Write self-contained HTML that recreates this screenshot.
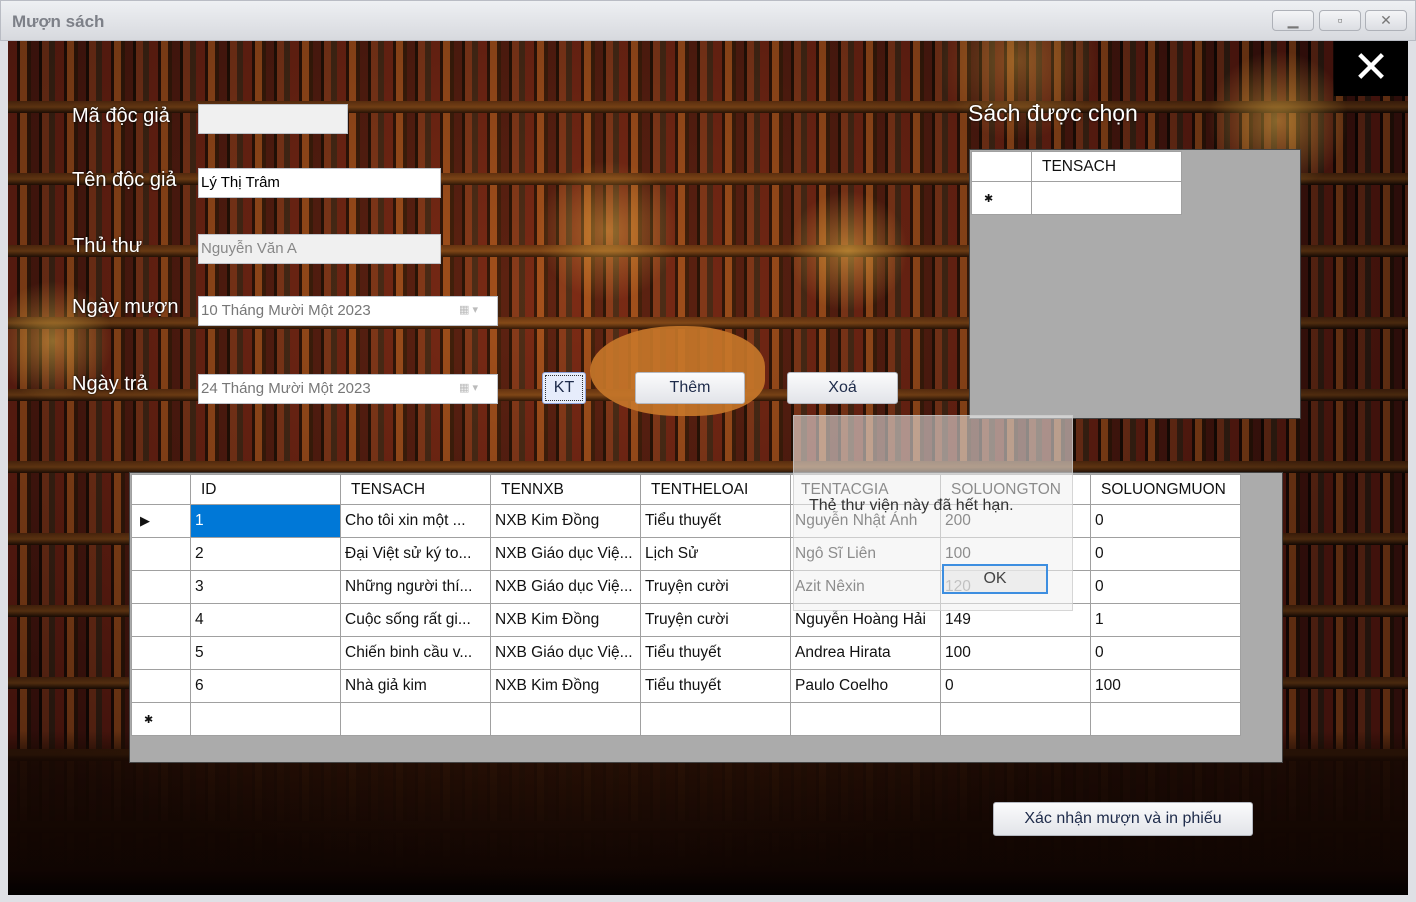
<!DOCTYPE html>
<html><head><meta charset="utf-8"><style>
*{margin:0;padding:0;box-sizing:border-box}
body{width:1416px;height:902px;overflow:hidden;background:#dfe0e5;font-family:"Liberation Sans","DejaVu Sans",sans-serif;position:relative}
.title{position:absolute;left:0;top:0;width:1416px;height:41px;background:linear-gradient(#eef0f3,#d7d9de);border:1px solid #b9bcc4}
.title span{position:absolute;left:11px;top:11px;font-size:17px;font-weight:bold;color:#7d8088}
.wb{position:absolute;top:9px;width:42px;height:21px;border:1px solid #aeb1b8;border-radius:4px;background:linear-gradient(#f4f5f7,#dcdee3);color:#777;text-align:center;font-size:14px;font-weight:bold;line-height:19px}
.main{position:absolute;left:8px;top:41px;width:1400px;height:854px;overflow:hidden;
background:
linear-gradient(180deg,rgba(0,0,0,0) 0,rgba(0,0,0,0) 690px,rgba(40,15,5,.9) 720px,#1a0803 830px,#050100 854px),
repeating-linear-gradient(180deg,rgba(0,0,0,0) 0,rgba(0,0,0,0) 60px,#5a2c10 60px,#7a4418 66px,#1a0a04 72px),
repeating-linear-gradient(90deg,#6a1e14 0,#6a1e14 9px,#1b0906 9px,#1b0906 12px,#9a4a1c 12px,#9a4a1c 19px,#2d1409 19px,#2d1409 23px,#4a1510 23px,#4a1510 31px,#120704 31px,#120704 34px,#7c321a 34px,#7c321a 41px,#3a2216 41px,#3a2216 47px);}
.dim{position:absolute;left:0;top:0;width:1400px;height:854px;background:
radial-gradient(circle at 45px 300px,rgba(255,200,80,.45),rgba(0,0,0,0) 60px),
radial-gradient(circle at 600px 190px,rgba(255,200,80,.4),rgba(0,0,0,0) 70px),
radial-gradient(circle at 840px 210px,rgba(255,200,80,.45),rgba(0,0,0,0) 60px),
radial-gradient(circle at 1270px 80px,rgba(255,200,80,.45),rgba(0,0,0,0) 70px),
radial-gradient(circle at 1010px 20px,rgba(255,200,80,.3),rgba(0,0,0,0) 80px),
radial-gradient(ellipse at 40% 30%,rgba(255,140,30,.12),rgba(0,0,0,.4) 70%)}
.lbl{position:absolute;color:#fff;font-size:20px;text-shadow:0 0 2px #000}
.inp{position:absolute;background:#fff;border:1px solid #bfc3ca;font-size:15px;padding:5px 2px;color:#000;height:30px}
.dis{background:#f0f0f0;color:#888}
.btn{position:absolute;height:32px;border:1px solid #b4b8c0;border-radius:3px;background:linear-gradient(#fbfbfc,#e2e4e9);font-size:16px;color:#1e2b4a;text-align:center;line-height:30px}
.dd{position:absolute;right:8px;top:6px;width:30px;height:16px;color:#bbb;font-size:11px}
table{border-collapse:collapse;table-layout:fixed;font-size:15.5px}
td{border:1px solid #a0a0a0;height:33px;padding:0 4px;white-space:nowrap;overflow:hidden;background:#fff;color:#111}
tr.h td{height:30px;padding-left:10px}
.grid{position:absolute;left:121px;top:431px;width:1154px;height:291px;background:#ababab;border:1px solid #444}
.grid table{position:absolute;left:1px;top:1px}
</style></head><body>
<div class="title"><span>Mượn sách</span>
<div class="wb" style="left:1271px">▁</div><div class="wb" style="left:1318px">▫</div><div class="wb" style="left:1364px">✕</div></div>
<div class="main"><div class="dim"></div>
<div style="position:absolute;left:1326px;top:0;width:74px;height:55px;background:#000;color:#fff;font-size:44px;text-align:center;line-height:54px;font-weight:bold">✕</div>
<div class="lbl" style="left:64px;top:64px">Mã độc giả</div>
<div class="lbl" style="left:64px;top:128px">Tên độc giả</div>
<div class="lbl" style="left:64px;top:194px">Thủ thư</div>
<div class="lbl" style="left:64px;top:255px">Ngày mượn</div>
<div class="lbl" style="left:64px;top:332px">Ngày trả</div>
<div class="lbl" style="left:960px;top:59px;font-size:23px">Sách được chọn</div>
<div class="inp dis" style="left:190px;top:63px;width:150px"></div>
<div class="inp" style="left:190px;top:127px;width:243px">Lý Thị Trâm</div>
<div class="inp dis" style="left:190px;top:193px;width:243px">Nguyễn Văn A</div>
<div class="inp" style="left:190px;top:255px;width:300px;color:#777">10 Tháng Mười Một 2023<span class="dd">▦ ▾</span></div>
<div class="inp" style="left:190px;top:333px;width:300px;color:#777">24 Tháng Mười Một 2023<span class="dd">▦ ▾</span></div>
<div style="position:absolute;left:582px;top:285px;width:175px;height:90px;border-radius:50% 45% 40% 50%;background:#c8782a;opacity:.9"></div>
<div class="btn" style="left:534px;top:331px;width:44px;background:#e6ecfb;border-color:#8fa3d8;outline:1px dotted #333;outline-offset:-4px">KT</div>
<div class="btn" style="left:627px;top:331px;width:110px">Thêm</div>
<div class="btn" style="left:779px;top:331px;width:111px">Xoá</div>
<div class="btn" style="left:985px;top:761px;width:260px;height:34px;line-height:32px">Xác nhận mượn và in phiếu</div>
<div style="position:absolute;left:961px;top:108px;width:332px;height:270px;background:#ababab;border:1px solid #444">
<table style="position:absolute;left:1px;top:1px"><colgroup><col style="width:60px"><col style="width:150px"></colgroup>
<tr class="h"><td></td><td>TENSACH</td></tr><tr><td style="font-size:11px;padding-left:12px">✱</td><td></td></tr></table></div>
<div class="grid"><table>
<colgroup><col style="width:59px"><col style="width:150px"><col style="width:150px"><col style="width:150px"><col style="width:150px"><col style="width:150px"><col style="width:150px"><col style="width:150px"></colgroup>
<tr class="h"><td></td><td>ID</td><td>TENSACH</td><td>TENNXB</td><td>TENTHELOAI</td><td>TENTACGIA</td><td>SOLUONGTON</td><td>SOLUONGMUON</td></tr>
<tr><td style="padding-left:8px;font-size:13px">▶</td><td style="background:#0078d7;color:#fff">1</td><td>Cho tôi xin một ...</td><td>NXB Kim Đồng</td><td>Tiểu thuyết</td><td>Nguyễn Nhật Ánh</td><td>200</td><td>0</td></tr>
<tr><td></td><td>2</td><td>Đại Việt sử ký to...</td><td>NXB Giáo dục Việ...</td><td>Lịch Sử</td><td>Ngô Sĩ Liên</td><td>100</td><td>0</td></tr>
<tr><td></td><td>3</td><td>Những người thí...</td><td>NXB Giáo dục Việ...</td><td>Truyện cười</td><td>Azit Nêxin</td><td>120</td><td>0</td></tr>
<tr><td></td><td>4</td><td>Cuộc sống rất gi...</td><td>NXB Kim Đồng</td><td>Truyện cười</td><td>Nguyễn Hoàng Hải</td><td>149</td><td>1</td></tr>
<tr><td></td><td>5</td><td>Chiến binh cầu v...</td><td>NXB Giáo dục Việ...</td><td>Tiểu thuyết</td><td>Andrea Hirata</td><td>100</td><td>0</td></tr>
<tr><td></td><td>6</td><td>Nhà giả kim</td><td>NXB Kim Đồng</td><td>Tiểu thuyết</td><td>Paulo Coelho</td><td>0</td><td>100</td></tr>
<tr><td style="font-size:11px;padding-left:12px">✱</td><td></td><td></td><td></td><td></td><td></td><td></td><td></td></tr>
</table></div>
<div style="position:absolute;left:785px;top:374px;width:280px;height:196px;background:rgba(240,240,240,.55);border:1px solid rgba(200,200,200,.7)">
<div style="position:absolute;left:15px;top:81px;font-size:16px;color:#333">Thẻ thư viện này đã hết hạn.</div>
<div style="position:absolute;left:148px;top:148px;width:106px;height:30px;border:2px solid #3d8ee0;background:rgba(230,230,230,.6);text-align:center;line-height:26px;font-size:16px;color:#444">OK</div>
</div>
</div>
</body></html>
